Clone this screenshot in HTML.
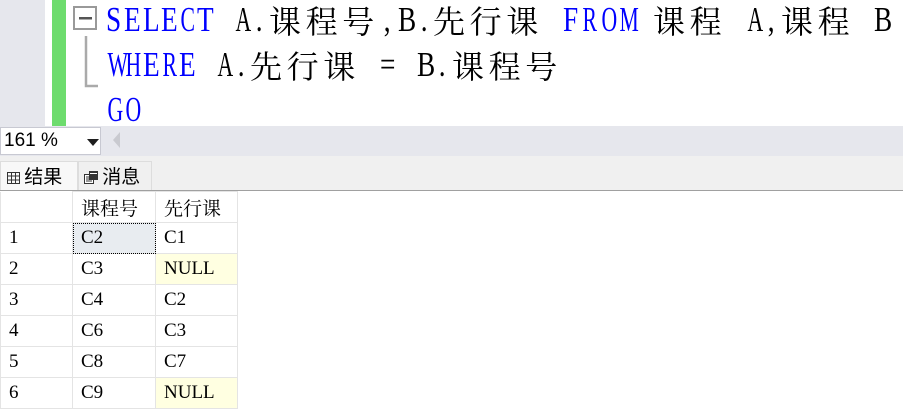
<!DOCTYPE html>
<html><head><meta charset="utf-8"><style>
body{margin:0;width:903px;height:420px;overflow:hidden;background:#fff;position:relative;font-family:"Liberation Sans","Noto Sans CJK SC",sans-serif}
.lm{position:absolute;left:0;top:0;width:45px;height:126px;background:#e6e7ed}
.gb{position:absolute;left:52px;top:0;width:14px;height:126px;background:#6ddc6d}
.t{position:absolute;font-family:"Liberation Serif",serif;font-size:35px;line-height:40px;white-space:pre;color:#000}
.t b{font-weight:normal;display:inline-block;width:18.3px;text-align:center;transform:scaleX(0.78)}
.t b.w{transform:scaleX(0.62)}
.k{color:#0000ff}
.z{position:absolute;font-family:"Noto Serif CJK SC",serif;font-size:32px;line-height:40px;letter-spacing:4.6px;white-space:pre;color:#000}
.zb{position:absolute;left:0;top:126px;width:903px;height:30px;background:#e6e7ed}
.combo{position:absolute;left:0;top:127px;width:101px;height:28px;background:#fff;border:1px solid #c8c9d2;box-sizing:border-box;font-size:19px;line-height:26px;padding-left:3px}
.tabs{position:absolute;left:0;top:156px;width:903px;height:34px;background:#f0f0f0;border-bottom:1px solid #a0a0a0}
.tab{position:absolute;top:5px;height:29px;font-size:19px;line-height:28px;box-sizing:border-box;font-family:"Noto Sans CJK SC",sans-serif}
table{position:absolute;left:0;top:191px;border-collapse:collapse;font-family:"Liberation Serif","Noto Serif CJK SC",serif;font-size:19px}
td{border:1px solid #e4e4e4;height:31px;padding:0 0 0 8px;box-sizing:border-box}
</style></head><body>
<div class="lm"></div><div class="gb"></div>
<svg style="position:absolute;left:72px;top:6px" width="30" height="82"><rect x="2" y="1" width="22" height="22" fill="#fff" stroke="#999" stroke-width="2"/><rect x="7" y="11" width="13" height="2.5" fill="#555"/><path d="M14 30V80H26" fill="none" stroke="#aaa" stroke-width="2.5"/></svg>

<div class="t k" style="left:104px;top:0"><b>S</b><b>E</b><b>L</b><b>E</b><b class="w">C</b><b>T</b></div>
<div class="t" style="left:232px;top:0"><b class="w">A</b><b>.</b></div>
<div class="z" style="left:269px;top:0">课程号</div>
<div class="t" style="left:378px;top:0"><b>,</b><b>B</b><b>.</b></div>
<div class="z" style="left:433px;top:0">先行课</div>
<div class="t k" style="left:561px;top:0"><b>F</b><b class="w">R</b><b class="w">O</b><b class="w">M</b></div>
<div class="z" style="left:653px;top:0">课程</div>
<div class="t" style="left:744px;top:0"><b class="w">A</b><b>,</b></div>
<div class="z" style="left:781px;top:0">课程</div>
<div class="t" style="left:872px;top:0"><b>B</b></div>

<div class="t k" style="left:104px;top:45px"><b class="w">W</b><b class="w">H</b><b>E</b><b class="w">R</b><b>E</b></div>
<div class="t" style="left:214px;top:45px"><b class="w">A</b><b>.</b></div>
<div class="z" style="left:250px;top:45px">先行课</div>
<div class="t" style="left:378px;top:45px"><b>=</b></div>
<div class="t" style="left:415px;top:45px"><b>B</b><b>.</b></div>
<div class="z" style="left:452px;top:45px">课程号</div>

<div class="t k" style="left:104px;top:90px"><b class="w">G</b><b class="w">O</b></div>

<div class="zb"></div>
<div class="combo">161 %<svg style="position:absolute;left:86px;top:11px" width="12" height="7"><path d="M0 0H12L6 7Z" fill="#1e1e1e"/></svg></div>
<svg style="position:absolute;left:113px;top:132px" width="8" height="16"><path d="M7 0V16L0 8Z" fill="#c9cad0"/></svg>
<div class="tabs">
<div class="tab" style="left:0;width:78px;background:#f8f8f8;border:1px solid #ddd;border-bottom:none;padding-left:6px">
<svg width="13" height="12" style="vertical-align:-1px"><path d="M0.5 0.5H12.5V11.5H0.5ZM0.5 4H12.5M0.5 8H12.5M4.5 0.5V11.5M8.5 0.5V11.5" fill="none" stroke="#333"/></svg> 结果</div>
<div class="tab" style="left:78px;width:74px;border:1px solid #ddd;border-bottom:none;padding-left:5px">
<svg width="14" height="13" style="vertical-align:-1px"><rect x="0.5" y="3.5" width="9" height="9" fill="#fff" stroke="#333"/><path d="M2 6H8M2 8H8M2 10H8" stroke="#333"/><rect x="5" y="0" width="9" height="9" fill="#333"/><rect x="6" y="2" width="7" height="1" fill="#fff"/></svg> 消息</div>
</div>
<table>
<tr><td style="width:72px;border-top:none"></td><td style="width:83px">课程号</td><td style="width:82px">先行课</td></tr>
<tr><td>1</td><td style="background:#e8ecf0;outline:1px dotted #000;outline-offset:-1px">C2</td><td>C1</td></tr>
<tr><td>2</td><td>C3</td><td style="background:#ffffe1">NULL</td></tr>
<tr><td>3</td><td>C4</td><td>C2</td></tr>
<tr><td>4</td><td>C6</td><td>C3</td></tr>
<tr><td>5</td><td>C8</td><td>C7</td></tr>
<tr><td>6</td><td>C9</td><td style="background:#ffffe1">NULL</td></tr>
</table>
</body></html>
